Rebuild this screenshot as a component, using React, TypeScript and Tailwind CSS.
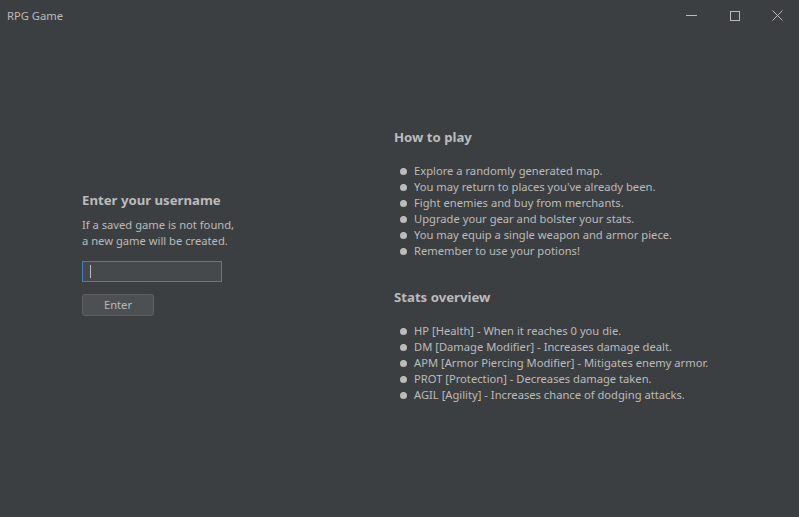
import React from "react";

const font = { fontFamily: '"Noto Sans", "Open Sans", sans-serif' };

function Bullet({ children }: { children: React.ReactNode }) {
  return (
    <li className="flex items-center h-4">
      <span className="w-[7px] h-[7px] rounded-full bg-[#bbbbbb] ml-[6px] mr-[7px] shrink-0" />
      <span className="whitespace-nowrap">{children}</span>
    </li>
  );
}

export default function App() {
  return (
    <div className="w-[799px] h-[517px] bg-[#3c3f41] text-[#bbbbbb] text-[11.2px] leading-4 overflow-hidden" style={font}>
      <div className="h-[31px] flex items-center justify-between">
        <span className="ml-[7px] text-[#bbbbbb]">RPG Game</span>
        <div className="flex items-center h-full">
          <div className="w-[43px] h-full flex items-center justify-center">
            <div className="w-[11px] h-px bg-[#bbbbbb]" />
          </div>
          <div className="w-[43px] h-full flex items-center justify-center">
            <div className="w-[10px] h-[10px] border border-[#bbbbbb]" />
          </div>
          <div className="w-[43px] h-full flex items-center justify-center">
            <svg width="11" height="11" viewBox="0 0 11 11">
              <path d="M0.5 0.5L10.5 10.5M10.5 0.5L0.5 10.5" stroke="#bbbbbb" strokeWidth="1" />
            </svg>
          </div>
        </div>
      </div>
      <div className="flex">
        <div className="ml-[82px] mt-[159px] w-[230px]">
          <h2 className="text-[13.2px] font-bold leading-5 text-[#bbbbbb]">Enter your username</h2>
          <p className="mt-[7px]">If a saved game is not found,</p>
          <p>a new game will be created.</p>
          <div className="mt-[12px] w-[140px] h-[21px] border border-[#4a7eb4] bg-[#45494a] flex items-center">
            <div className="ml-[7px] w-px h-[13px] bg-[#bbbbbb]" />
          </div>
          <button className="mt-[12px] w-[72px] h-[22px] rounded-[3px] border border-[#5e6060] bg-[#4c5052] text-[#bbbbbb] text-[11.2px] leading-4" style={font}>
            Enter
          </button>
        </div>
        <div className="ml-[82px] mt-[96px]">
          <h2 className="text-[13.2px] font-bold leading-5">How to play</h2>
          <ul className="mt-[16px]">
            <Bullet>Explore a randomly generated map.</Bullet>
            <Bullet>You may return to places you've already been.</Bullet>
            <Bullet>Fight enemies and buy from merchants.</Bullet>
            <Bullet>Upgrade your gear and bolster your stats.</Bullet>
            <Bullet>You may equip a single weapon and armor piece.</Bullet>
            <Bullet>Remember to use your potions!</Bullet>
          </ul>
          <h2 className="mt-[28px] text-[13.2px] font-bold leading-5">Stats overview</h2>
          <ul className="mt-[16px]">
            <Bullet>HP [Health] - When it reaches 0 you die.</Bullet>
            <Bullet>DM [Damage Modifier] - Increases damage dealt.</Bullet>
            <Bullet>APM [Armor Piercing Modifier] - Mitigates enemy armor.</Bullet>
            <Bullet>PROT [Protection] - Decreases damage taken.</Bullet>
            <Bullet>AGIL [Agility] - Increases chance of dodging attacks.</Bullet>
          </ul>
        </div>
      </div>
    </div>
  );
}
